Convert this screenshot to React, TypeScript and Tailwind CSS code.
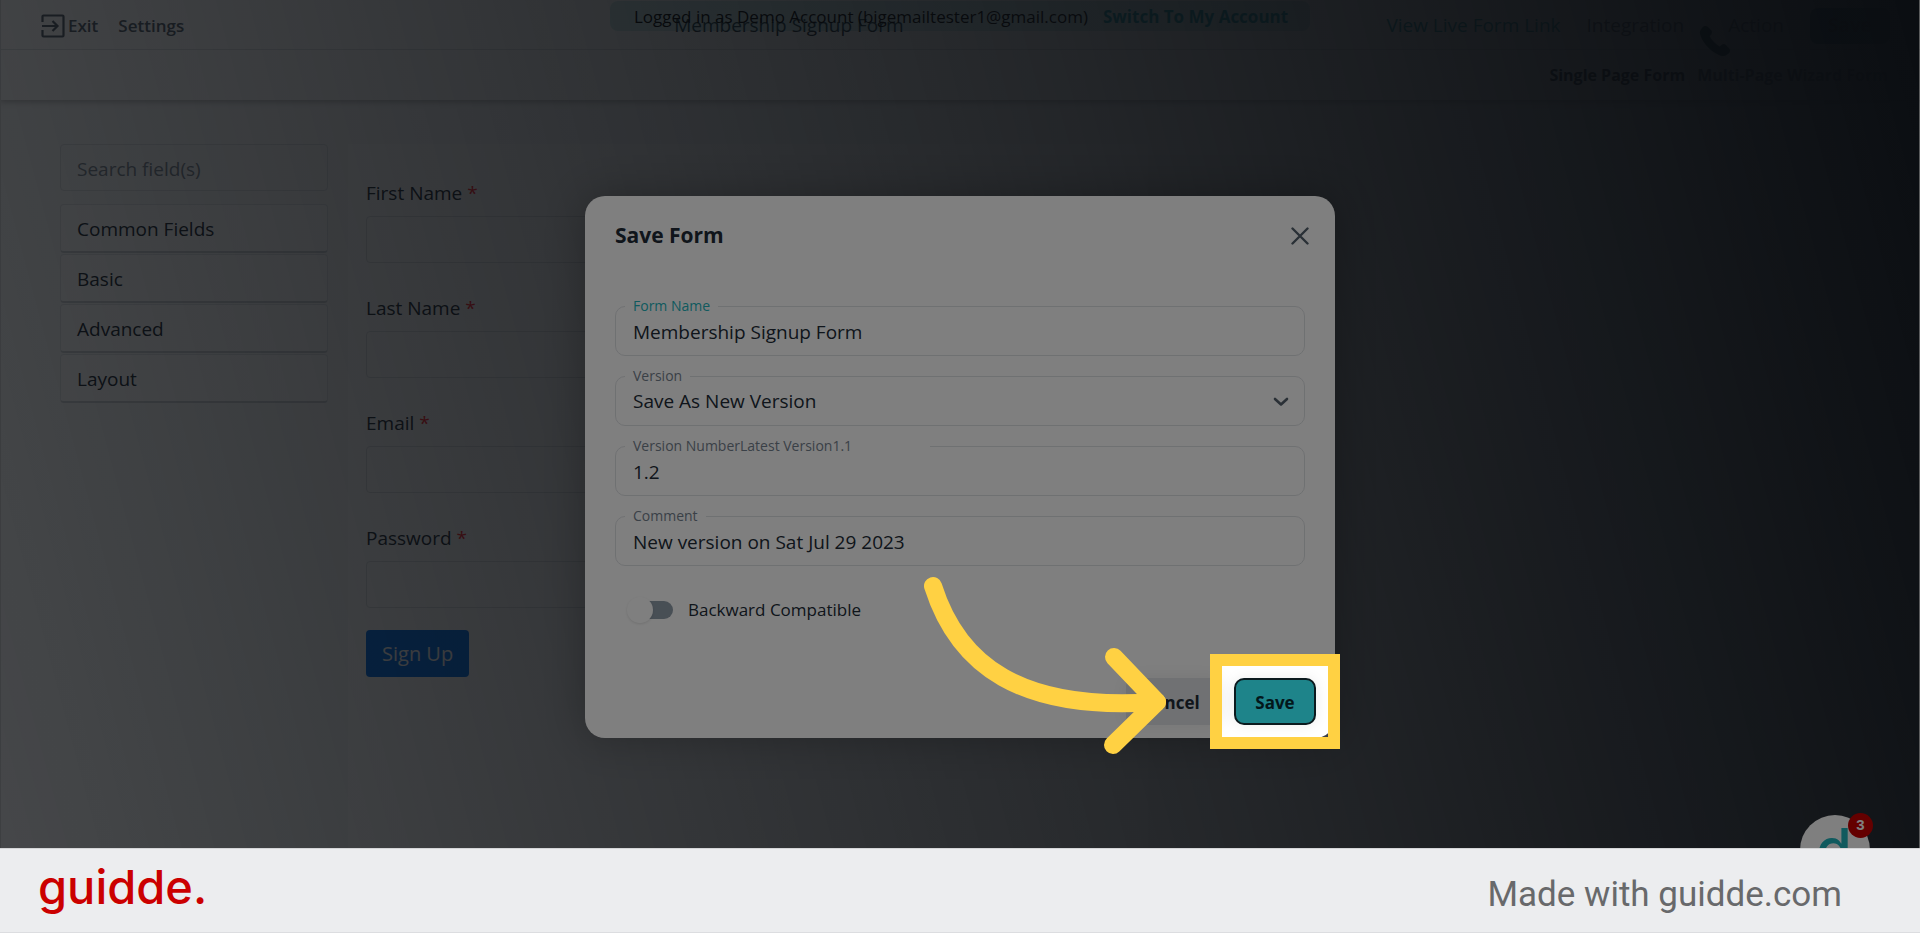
import React from "react";

const requiredFields = ["First Name", "Last Name", "Email", "Password"];
const fieldGroups = ["Common Fields", "Basic", "Advanced", "Layout"];

function ExitIcon() {
  return (
    <svg width="24" height="24" viewBox="0 0 24 24" fill="none" stroke="currentColor" strokeWidth="2.2" aria-hidden="true">
      <path d="M1.500 8V2.500a1 1 0 0 1 1-1h19a1 1 0 0 1 1 1v19a1 1 0 0 1-1 1h-19a1 1 0 0 1-1-1V16" />
      <path d="M1 12h15M11.500 7l5 5-5 5" />
    </svg>
  );
}

function TopBar() {
  return (
    <header className="relative bg-white shadow-[0_2px_6px_rgba(0,0,0,0.25)]">
      <div className="flex h-[50px] items-center border-b border-[#dfe2e5] pl-[41px] pr-[30px] pt-[2px] text-[17px] text-[#54616d]">
        <nav className="flex items-center gap-5 font-semibold">
          <a href="#exit" className="flex items-center gap-[3px]">
            <ExitIcon />
            Exit
          </a>
          <a href="#settings">Settings</a>
        </nav>
        <h1 className="ml-[490px] text-[19px] whitespace-nowrap text-[#212b36]">Membership Signup Form</h1>
        <nav className="ml-auto flex items-center gap-[26px] text-[19px] whitespace-nowrap">
          <a href="#live" className="text-[#1aa5ad]">View Live Form Link</a>
          <a href="#integration">Integration</a>
          <a href="#action" className="pl-[18px]">Action</a>
          <button type="button" className="h-9 w-20 rounded-lg bg-[#13686e] font-bold text-black">Save</button>
        </nav>
      </div>
      <div className="flex h-[50px] items-center justify-end gap-3 pr-8 text-base font-bold text-[#212b36]">
        <button type="button">Single Page Form</button>
        <button type="button" className="text-[#54616d]">Multi-Page Wizard Form</button>
      </div>
      <div className="absolute left-1/2 top-px flex h-[30px] w-[700px] -translate-x-1/2 items-center gap-[15px] rounded-lg bg-[#159ea6]/20 pl-[24px] pt-[2px] text-[17px] whitespace-nowrap text-black">
        <p className="font-medium">Logged in as Demo Account (bigemailtester1@gmail.com)</p>
        <a href="#switch" className="font-bold text-[#1a9fae]">Switch To My Account</a>
      </div>
      <svg className="absolute right-[188px] top-6" width="34" height="34" viewBox="0 0 24 24" fill="#00302a" aria-hidden="true">
        <path d="M6.600 1.800c-1-.8-2.500-.5-3.200.400L1.900 4.100c-.9 1.200-.6 3 .1 4.800C4.200 14.500 9.500 19.800 15.100 22c1.800.7 3.600 1 4.800.1l1.900-1.500c.9-.7 1.200-2.200.400-3.200l-2.500-2.600c-.8-.8-2-.9-2.900-.2l-1.500 1.200c-2.800-1.500-5.600-4.300-7.100-7.100l1.200-1.500c.7-.9.6-2.100-.2-2.900z" />
      </svg>
    </header>
  );
}

function Builder() {
  return (
    <main className="flex gap-5 px-[60px] pt-11 text-[19px] text-[#212b36]">
      <aside className="w-[268px] shrink-0">
        <input
          aria-label="Search field(s)"
          placeholder="Search field(s)"
          className="h-[47px] w-full rounded border border-[#dfe2e5] px-4 pt-[2px] placeholder:text-[#7d8893]"
        />
        <ul className="mt-[13px]">
          {fieldGroups.map((group) => (
            <li key={group} className="mb-px">
              <button
                type="button"
                className="h-[49px] w-full rounded border border-b-2 border-[#e4e7ea] border-b-[#ced2d6] bg-white px-4 pt-[2px] text-left"
              >
                {group}
              </button>
            </li>
          ))}
        </ul>
      </aside>
      <form className="min-h-[789px] w-[800px] bg-white px-[18px] pt-[34px]">
        {requiredFields.map((name) => (
          <label key={name} className="mb-[30px] block">
            <span className="block h-[38px] leading-[30px]">
              {name} <span className="text-[#ff202a]">*</span>
            </span>
            <input className="block h-[47px] w-full rounded border border-[#dfe2e5]" />
          </label>
        ))}
        <button type="button" className="-mt-2 h-[47px] rounded bg-[#0072f0] px-4 text-xl text-white">
          Sign Up
        </button>
      </form>
    </main>
  );
}

const boxStyle =
  "h-[50px] w-full appearance-none rounded-[10px] border border-[#dfe2e5] bg-white px-[17px] pb-0 pt-[2px] text-[19px] text-[#212b36] outline-none";
const captionStyle = "absolute -top-[11px] left-[10px] bg-white px-[8px] text-[14px] leading-[22px]";

function TextField({ id, label, value, accent, wide }: { id: string; label: string; value: string; accent?: boolean; wide?: boolean }) {
  return (
    <div className="relative">
      <input id={id} defaultValue={value} className={boxStyle} />
      <label htmlFor={id} className={`${captionStyle} ${accent ? "text-[#22b4bd]" : "text-[#75818e]"} ${wide ? "w-[305px]" : ""}`}>
        {label}
      </label>
    </div>
  );
}

function SaveDialog() {
  return (
    <section
      role="dialog"
      aria-labelledby="dialog-title"
      className="relative flex w-[750px] flex-col rounded-[20px] bg-white px-[30px] pb-[13px] shadow-[0_0_40px_rgba(0,0,0,0.24)]"
    >
      <div className="flex h-20 items-center justify-between">
        <h2 id="dialog-title" className="text-[21px] font-bold text-[#212b36]">Save Form</h2>
        <button type="button" aria-label="Close" className="-mr-[5px] p-px text-[#54616d]">
          <svg width="18" height="18" viewBox="0 0 18 18" fill="none" stroke="currentColor" strokeWidth="2.4" strokeLinecap="round">
            <path d="M1.500 1.500l15 15M16.500 1.500l-15 15" />
          </svg>
        </button>
      </div>
      <div className="mt-[30px] flex flex-col gap-5">
        <TextField id="form-name" label="Form Name" value="Membership Signup Form" accent />
        <div className="relative">
          <select id="version" className={boxStyle}>
            <option>Save As New Version</option>
          </select>
          <label htmlFor="version" className={`${captionStyle} text-[#75818e]`}>Version</label>
          <svg className="pointer-events-none absolute right-4 top-[21px] text-[#54616d]" width="16" height="10" viewBox="0 0 16 10" fill="none" stroke="currentColor" strokeWidth="2.600" strokeLinecap="round" strokeLinejoin="round" aria-hidden="true">
            <path d="M2 2l6 5.500L14 2" />
          </svg>
        </div>
        <TextField id="version-number" label="Version NumberLatest Version1.1" value="1.2" wide />
        <TextField id="comment" label="Comment" value="New version on Sat Jul 29 2023" />
      </div>
      <label className="ml-3 mt-[31px] flex h-[26px] items-center gap-[15px] text-[17px] text-[#212b36]">
        <span className="relative flex h-[26px] w-[46px] items-center justify-end">
          <input type="checkbox" className="peer sr-only" />
          <span className="h-[18px] w-10 rounded-full bg-[#919eab]" />
          <span className="absolute left-0 top-0 size-[26px] rounded-full bg-white shadow-[0_1px_3px_rgba(0,0,0,0.12)]" />
        </span>
        Backward Compatible
      </label>
      <div className="-mr-[11px] mt-[55px] flex justify-end gap-3 text-[17px] font-bold text-[#212b36]">
        <button type="button" className="h-[47px] w-24 rounded-lg bg-[#e1e3e6] pr-[5px] pt-1 shadow-[0_0_20px_rgba(0,0,0,0.08)]">Cancel</button>
        <div className="relative">
          <button type="button" className="h-[47px] w-[82px] rounded-[10px] border-2 border-[#0b1a1e] bg-[#1e848a] pt-1 text-[#03171b] shadow-[0_0_14px_rgba(0,0,0,0.08)]">
            Save
          </button>
          <span className="pointer-events-none absolute -inset-6 border-12 border-[#ffd143] shadow-[0_0_0_3000px_rgba(0,0,0,0.5)]" />
        </div>
      </div>
      <svg className="pointer-events-none absolute -bottom-[22px] right-[165px]" width="250" height="190" viewBox="920 570 250 190" fill="none" stroke="#ffd143" strokeWidth="18" strokeLinecap="round" strokeLinejoin="round" aria-hidden="true">
        <path d="M933 586C958 665 1020 712 1157 702" />
        <path d="M1114 657l43 45-44 43" />
      </svg>
    </section>
  );
}

function ChatBubble() {
  return (
    <button type="button" aria-label="Open chat, 3 unread" className="absolute bottom-12 right-[50px] size-[70px] rounded-full bg-white">
      <span className="absolute left-4 top-[2px] font-['Inter',sans-serif] text-[58px] font-medium leading-[64px] text-[#20b4bc]">d</span>
      <span className="absolute -right-[3px] -top-[2px] flex size-[25px] items-center justify-center rounded-full bg-[#c80000] font-['Liberation_Sans',sans-serif] text-[15px] font-bold text-white">
        3
      </span>
    </button>
  );
}

export default function App() {
  return (
    <div className="relative min-h-screen overflow-hidden bg-[#f9fafb] font-['Open_Sans','Noto_Sans',sans-serif]">
      <div className="h-screen overflow-hidden">
        <TopBar />
        <Builder />
      </div>
      <div className="absolute inset-0 border-x border-white/40 bg-[linear-gradient(75deg,rgba(22,28,36,0.48)_0%,rgb(22,28,36)_100%)]" />
      <ChatBubble />
      <div className="absolute inset-0 flex items-center justify-center overflow-hidden">
        <SaveDialog />
      </div>
      <footer className="absolute inset-x-0 bottom-0 flex h-[85px] items-center justify-between border-b border-t border-b-[#dcdde0] border-t-[#d4d5d7] bg-[#ecedef] pl-[38px] pr-[78px]">
        <a href="#guidde" className="pb-2 font-['Inter',sans-serif] text-[47px] font-medium leading-[56px] text-[#cb0000]">guidde.</a>
        <p className="pt-2 font-['Roboto',sans-serif] text-[35px] leading-[42px] text-[#68696b]">Made with guidde.com</p>
      </footer>
    </div>
  );
}
